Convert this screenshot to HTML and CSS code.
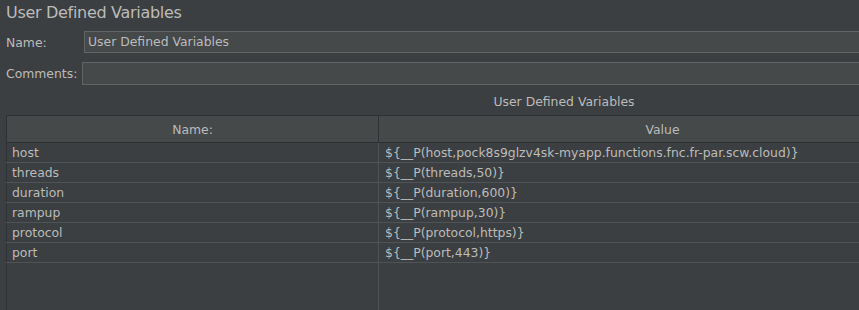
FILE: index.html
```html
<!DOCTYPE html>
<html lang="en">
<head>
    <meta charset="UTF-8">
    <title>User Defined Variables</title>
    <link rel="stylesheet" href="styles.css">
</head>
<body>
    <div class="panel">
        <h1 class="panel-title">User Defined Variables</h1>

        <div class="field field-name">
            <label class="field-label">Name:</label>
            <div class="field-input">User Defined Variables</div>
        </div>

        <div class="field field-comments">
            <label class="field-label">Comments:</label>
            <div class="field-input"></div>
        </div>

        <div class="vars">
            <div class="vars-title">User Defined Variables</div>
            <table class="vars-table">
                <colgroup>
                    <col class="col-name">
                    <col class="col-value">
                </colgroup>
                <thead>
                    <tr>
                        <th>Name:</th>
                        <th>Value</th>
                    </tr>
                </thead>
                <tbody>
                    <tr><td>host</td><td>${__P(host,pock8s9glzv4sk-myapp.functions.fnc.fr-par.scw.cloud)}</td></tr>
                    <tr><td>threads</td><td>${__P(threads,50)}</td></tr>
                    <tr><td>duration</td><td>${__P(duration,600)}</td></tr>
                    <tr><td>rampup</td><td>${__P(rampup,30)}</td></tr>
                    <tr><td>protocol</td><td>${__P(protocol,https)}</td></tr>
                    <tr><td>port</td><td>${__P(port,443)}</td></tr>
                    <tr class="filler"><td></td><td></td></tr>
                </tbody>
            </table>
        </div>
    </div>
</body>
</html>
```

FILE: styles.css
```css
* {
    margin: 0;
    padding: 0;
    box-sizing: border-box;
}

body {
    font-family: 'DejaVu Sans', sans-serif;
    font-size: 12.4px;
    background: #3c3f41;
    color: #bbbbbb;
    overflow: hidden;
    height: 100vh;
}

.panel {
    width: 1122px;
    padding: 2px 0 0 6px;
}

/* element title, thin and narrow */
.panel-title {
    font-size: 16px;
    font-weight: 400;
    letter-spacing: -0.3px;
    line-height: 22px;
    height: 22px;
    margin-bottom: 7px;
}

.field {
    display: flex;
    align-items: center;
}

.field-label {
    line-height: 15px;
}

.field-name .field-label {
    width: 78px;
}

.field-comments {
    margin-top: 9px;
}

.field-comments .field-label {
    width: 76px;
}

.field-input {
    flex: 1;
    height: 22px;
    background: #45494a;
    border: 1px solid #646464;
    padding: 0 3px;
    line-height: 20px;
    white-space: nowrap;
}

.field-comments .field-input {
    height: 23px;
}

.vars {
    margin-top: 9px;
}

.vars-title {
    text-align: center;
    line-height: 15px;
    margin-bottom: 6px;
}

.vars-table {
    border-collapse: collapse;
    table-layout: fixed;
    width: 941px;
}

.col-name {
    width: 372px;
}

.vars-table th {
    font-weight: 400;
    background: #45494a;
    height: 27px;
    border: 1px solid #2e3133;
    line-height: 15px;
}

.vars-table td {
    height: 20px;
    border: 1px solid #505356;
    padding: 0 5px;
    line-height: 15px;
    white-space: nowrap;
}

.vars-table td:first-child {
    border-left-color: #2e3133;
}

.vars-table td:last-child {
    padding-left: 6px;
}

.vars-table .filler td {
    height: 60px;
    border-bottom: none;
}
```
